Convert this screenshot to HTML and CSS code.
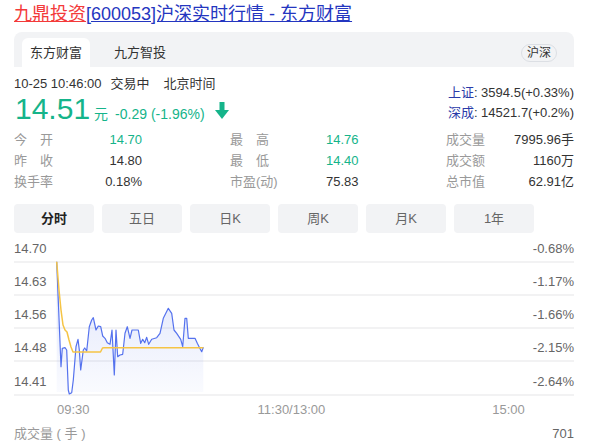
FILE: index.html
```html
<!DOCTYPE html>
<html lang="zh-CN">
<head>
<meta charset="utf-8">
<title>九鼎投资[600053]沪深实时行情 - 东方财富</title>
<link rel="stylesheet" href="styles.css">
</head>
<body>
<div class="page">
  <h1 class="title"><a class="red" href="#">九鼎投资</a><a class="blue" href="#">[600053]沪深实时行情 - 东方财富</a></h1>

  <div class="bar">
    <div class="tabs">
      <span class="tab active">东方财富</span>
      <span class="tab">九方智投</span>
    </div>
    <span class="pill">沪深</span>
  </div>

  <div class="info">
    <div class="left">
      <div class="time">10-25 10:46:00<span class="gap1">交易中</span><span class="gap2">北京时间</span></div>
      <div class="price-row">
        <span class="price">14.51</span>
        <span class="yuan">元</span>
        <span class="chg">-0.29 (-1.96%)</span>
        <svg class="arrow" width="14" height="17" viewBox="0 0 14 17"><rect x="4.5" y="0" width="5" height="9" fill="#15b48a"/><polygon points="0,8 14,8 7,17" fill="#15b48a"/></svg>
      </div>
    </div>
    <div class="idx">
      <div><span class="idx-name">上证</span>: 3594.5(+0.33%)</div>
      <div><span class="idx-name">深成</span>: 14521.7(+0.2%)</div>
    </div>
  </div>

  <div class="stats">
    <span class="lbl">今　开</span><span class="val green">14.70</span>
    <span class="lbl l2">最　高</span><span class="val2 green">14.76</span>
    <span class="lbl">成交量</span><span class="val">7995.96手</span>

    <span class="lbl">昨　收</span><span class="val">14.80</span>
    <span class="lbl l2">最　低</span><span class="val2 green">14.40</span>
    <span class="lbl">成交额</span><span class="val">1160万</span>

    <span class="lbl">换手率</span><span class="val">0.18%</span>
    <span class="lbl l2">市盈(动)</span><span class="val2">75.83</span>
    <span class="lbl">总市值</span><span class="val">62.91亿</span>
  </div>

  <div class="periods">
    <span class="btn active">分时</span>
    <span class="btn">五日</span>
    <span class="btn">日K</span>
    <span class="btn">周K</span>
    <span class="btn">月K</span>
    <span class="btn">1年</span>
  </div>

  <div class="chart">
    <div class="row first"><span>14.70</span><span>-0.68%</span></div>
    <div class="row"><span>14.63</span><span>-1.17%</span></div>
    <div class="row"><span>14.56</span><span>-1.66%</span></div>
    <div class="row"><span>14.48</span><span>-2.15%</span></div>
    <div class="row"><span>14.41</span><span>-2.64%</span></div>
    <svg class="plot" width="560" height="160" viewBox="14 237 560 160">
      <defs>
        <linearGradient id="fill" x1="0" y1="0" x2="0" y2="1">
          <stop offset="0" stop-color="#5a78ec" stop-opacity="0.2"/>
          <stop offset="1" stop-color="#5a78ec" stop-opacity="0.03"/>
        </linearGradient>
      </defs>
      <path d="M56.7,261.7 L61,366.7 62.3,348.3 65,347.7 66.7,350 68.3,390 69.3,394 71.7,392.7 73.3,380 76,346.7 78,339.3 79.3,350 80.7,370 83.3,350 84.7,348 86.7,351 89.3,326.7 91.7,320 93.3,317.7 96,330 98.3,326 100.7,326.7 102.7,336 105,338.3 107.3,342.7 110,344.3 112,330 114.3,375 116,330 117.7,356.7 120,355 122.7,354.3 125,333.3 127.3,326.7 130,338.3 132,330 138.3,330 140.7,343.3 142.7,339.3 144.7,342.7 146.7,337.3 148.7,344.3 151.7,339.3 156.7,337.7 160,333.3 163.3,318.3 168.3,308.3 171.7,313.3 174,330 176.7,333.3 180.7,339.3 182.7,346.7 185,318.3 186.7,318.3 188.3,338.3 195,338.3 197.3,343.3 199.3,347.3 201.7,351.7 203.3,347.3 L203.3,392 L56.7,392 Z" fill="url(#fill)"/>
      <polyline points="56.7,261.7 61,366.7 62.3,348.3 65,347.7 66.7,350 68.3,390 69.3,394 71.7,392.7 73.3,380 76,346.7 78,339.3 79.3,350 80.7,370 83.3,350 84.7,348 86.7,351 89.3,326.7 91.7,320 93.3,317.7 96,330 98.3,326 100.7,326.7 102.7,336 105,338.3 107.3,342.7 110,344.3 112,330 114.3,375 116,330 117.7,356.7 120,355 122.7,354.3 125,333.3 127.3,326.7 130,338.3 132,330 138.3,330 140.7,343.3 142.7,339.3 144.7,342.7 146.7,337.3 148.7,344.3 151.7,339.3 156.7,337.7 160,333.3 163.3,318.3 168.3,308.3 171.7,313.3 174,330 176.7,333.3 180.7,339.3 182.7,346.7 185,318.3 186.7,318.3 188.3,338.3 195,338.3 197.3,343.3 199.3,347.3 201.7,351.7 203.3,347.3" fill="none" stroke="#5572ee" stroke-width="1.2" stroke-linejoin="round"/>
      <polyline points="56.7,261.7 59,290 61,310 63,325 65,330 67,332 69,340 71,347 73,352 100.5,352 102.5,348 104,347.7 203.3,347.7" fill="none" stroke="#f5c445" stroke-width="1.5" stroke-linejoin="round"/>
    </svg>
  </div>

  <div class="axis">
    <span class="t1">09:30</span>
    <span class="t2">11:30/13:00</span>
    <span class="t3">15:00</span>
  </div>

  <div class="vol">
    <span class="vol-lbl">成交量 ( 手 )</span>
    <span class="vol-max">701</span>
  </div>
  <div class="vol-bars"><span class="vbar"></span></div>
</div>
</body>
</html>
```

FILE: styles.css
```css
html, body {
  margin: 0;
  padding: 0;
  background: #fff;
}

body {
  font-family: "Liberation Sans", Arial, "Noto Sans CJK SC", sans-serif;
  color: #333;
  overflow: hidden;
}

.page {
  width: 560px;
  padding: 0 24px 0 14px;
}

.title {
  margin: 0;
  padding-top: 1px;
  font-size: 18px;
  line-height: 26px;
  font-weight: normal;
  white-space: nowrap;
}

.title a {
  text-decoration: underline;
}

.title .red {
  color: #f33a3a;
}

.title .blue {
  color: #2436c0;
}

.bar {
  margin-top: 5px;
  height: 35px;
  background: #f2f3f5;
  border-radius: 8px 8px 0 0;
  display: flex;
  align-items: flex-end;
  padding: 0 17px 0 8px;
}

.tabs {
  display: flex;
  gap: 16px;
}

.tab {
  height: 29px;
  line-height: 29px;
  padding: 0 8px;
  font-size: 13px;
  color: #333;
  border-radius: 6px 6px 0 0;
}

.tab.active {
  background: #fff;
}

.pill {
  margin-left: auto;
  margin-bottom: 5px;
  height: 16px;
  line-height: 16px;
  padding: 0 5px;
  border: 1px solid #dcdfe4;
  border-radius: 9px;
  font-size: 12px;
  color: #333;
}

.info {
  display: flex;
  justify-content: space-between;
  padding-top: 8px;
}

.time {
  font-size: 13px;
  line-height: 18px;
  color: #333;
  white-space: nowrap;
}

.gap1 {
  margin-left: 9px;
}

.gap2 {
  margin-left: 14px;
}

.price-row {
  display: flex;
  align-items: baseline;
  height: 32px;
  color: #15b48a;
}

.price {
  font-size: 30px;
  line-height: 32px;
  margin-left: 1px;
}

.yuan {
  font-size: 14px;
  margin-left: 4px;
}

.chg {
  font-size: 14px;
  margin-left: 7px;
}

.arrow {
  margin-left: 10px;
  margin-bottom: -2px;
}

.idx {
  padding-top: 8px;
  font-size: 13px;
  line-height: 20px;
  text-align: right;
  color: #333;
}

.idx-name {
  color: #2a3aa8;
}

.stats {
  margin-top: 3.5px;
  display: grid;
  grid-template-columns: 80px 48px 184px 120px 60px 68px;
  grid-auto-rows: 21px;
  align-items: center;
  font-size: 13px;
  line-height: 21px;
  white-space: nowrap;
}

.lbl {
  color: #999;
}

.lbl.l2 {
  padding-left: 88px;
}

.val {
  text-align: right;
  color: #333;
}

.val2 {
  color: #333;
}

.green {
  color: #15b48a;
}

.periods {
  margin-top: 12.5px;
  display: flex;
  gap: 8px;
}

.btn {
  width: 80px;
  height: 29px;
  line-height: 29px;
  text-align: center;
  background: #f2f3f5;
  border-radius: 4px;
  font-size: 13px;
  color: #666;
}

.btn.active {
  color: #222;
  font-weight: bold;
}

.chart {
  position: relative;
  margin-top: 4px;
}

.row {
  box-sizing: border-box;
  height: 33.25px;
  display: flex;
  justify-content: space-between;
  align-items: flex-end;
  padding-bottom: 5px;
  border-bottom: 2px solid #f2f2f3;
  font-size: 13px;
  line-height: 14px;
  color: #666;
}

.row.first {
  height: 25.5px;
}

.plot {
  position: absolute;
  left: 0;
  top: 0;
  overflow: visible;
}

.axis {
  display: flex;
  height: 26px;
  align-items: center;
  font-size: 13px;
  line-height: 14px;
  color: #999;
  padding-top: 1px;
}

.t1 {
  margin-left: 43px;
}

.t2 {
  margin-left: 168px;
}

.t3 {
  margin-left: 167px;
}

.vol {
  display: flex;
  justify-content: space-between;
  height: 22px;
  align-items: center;
  font-size: 13px;
  line-height: 14px;
}

.vol-lbl {
  color: #999;
}

.vol-max {
  color: #666;
}

.vol-bars {
  height: 10px;
  display: flex;
  align-items: flex-start;
  padding-top: 2px;
}

.vbar {
  margin-left: 45px;
  width: 2px;
  height: 8px;
  background: #15b48a;
}
```
